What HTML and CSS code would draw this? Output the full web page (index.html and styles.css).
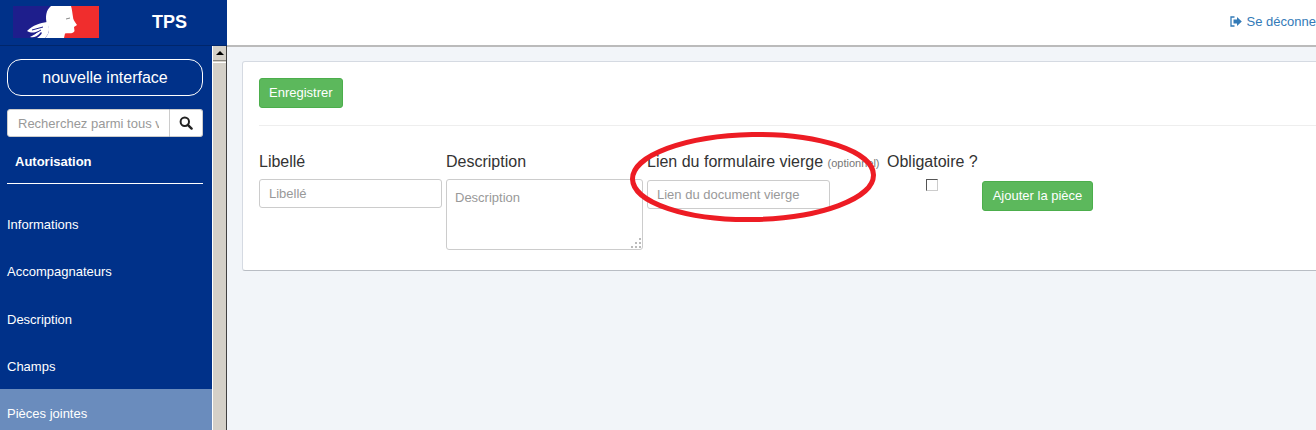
FILE: index.html
```html
<!DOCTYPE html>
<html lang="fr">
<head>
<meta charset="UTF-8">
<title>TPS - Pièces jointes</title>
<link rel="stylesheet" href="styles.css">
</head>
<body>

  <div class="sidebar">
    <div class="brand">
      <svg class="logo" width="86" height="32" viewBox="0 0 86 32">
        <rect width="44" height="32" fill="#1e1e8c"/>
        <rect x="44" width="42" height="32" fill="#f02d2d"/>
        <path d="M38 0 L58 0 C59 3 59.500 8 60 11 C60 13 61 15 64 19 L61 21 L61.500 25 C60 28 57 27 52 27.500 L51 32 L32 32 C37 27 37 22 34 18 C32 11 33 4 38 0 Z" fill="#fff"/>
        <path d="M14 25 C20 19 27 17 34 16 C37 22 37 27 32 32 L24 32 C28 29 30 27 28 26 C24 31 20 32 17 31 C21 29 24 27 25 25 C21 27 18 27 14 25 Z" fill="#fff"/>
        <path d="M19 24 L30 21 M21 28 L28 24" stroke="#1e1e8c" stroke-width="1"/>
        <path d="M53 13 L57 12" stroke="#888" stroke-width="1"/>
      </svg>
      <span class="brand-name">TPS</span>
    </div>
    <div class="side-body">
      <div class="side-panel">
        <a class="new-ui">nouvelle interface</a>
        <div class="search">
          <input class="search-input" type="text" placeholder="Recherchez parmi tous vos dossiers">
          <button class="search-btn">
            <svg width="14" height="14" viewBox="0 0 14 14"><circle cx="5.800" cy="5.800" r="4.200" fill="none" stroke="#222" stroke-width="2"/><path d="M8.800 8.800 L12.600 12.600" stroke="#222" stroke-width="2.400" stroke-linecap="round"/></svg>
          </button>
        </div>
        <div class="proc-title">Autorisation</div>
        <nav class="menu">
          <a class="menu-item">Informations</a>
          <a class="menu-item">Accompagnateurs</a>
          <a class="menu-item">Description</a>
          <a class="menu-item">Champs</a>
          <a class="menu-item active">Pièces jointes</a>
        </nav>
      </div>
      <div class="scrollbar">
        <div class="scroll-arrow"></div>
        <div class="scroll-thumb"></div>
      </div>
    </div>
  </div>

  <div class="main">
    <div class="topbar">
      <a class="logout">
        <svg width="12" height="11" viewBox="0 0 12 11"><path d="M4.500 1 H1 V10 H4.500" fill="none" stroke="#337ab7" stroke-width="1.300"/><path d="M3.500 3.500 H7 V1 L11.800 5.500 L7 10 V7.500 H3.500 Z" fill="#337ab7"/></svg>
        Se déconnecter
      </a>
    </div>
    <div class="content">
      <div class="card">
        <div class="card-top">
          <button class="btn">Enregistrer</button>
        </div>
        <div class="fields">
          <div class="field field-name">
            <label>Libellé</label>
            <input type="text" placeholder="Libellé">
          </div>
          <div class="field field-desc">
            <label>Description</label>
            <div class="area-wrap">
              <textarea placeholder="Description"></textarea>
              <svg class="grip" width="10" height="10" viewBox="0 0 10 10" fill="#bbb">
                <rect x="8" y="0" width="2" height="2"/>
                <rect x="4" y="4" width="2" height="2"/><rect x="8" y="4" width="2" height="2"/>
                <rect x="0" y="8" width="2" height="2"/><rect x="4" y="8" width="2" height="2"/><rect x="8" y="8" width="2" height="2"/>
              </svg>
            </div>
          </div>
          <div class="field field-link">
            <label>Lien du formulaire vierge <small>(optionnel)</small></label>
            <input type="text" placeholder="Lien du document vierge">
          </div>
          <div class="field field-check">
            <label>Obligatoire ?</label>
            <span class="check"></span>
          </div>
          <button class="btn btn-add">Ajouter la pièce</button>
        </div>
      </div>
    </div>
  </div>

  <svg class="circle-mark" width="260" height="104" viewBox="0 0 260 104">
    <ellipse cx="130" cy="52" rx="120.500" ry="42.500" transform="rotate(-1 130 52)" fill="none" stroke="#ed1c24" stroke-width="5"/>
  </svg>

</body>
</html>
```

FILE: styles.css
```css
html, body {
  margin: 0;
  padding: 0;
  height: 100%;
  overflow: hidden;
}
body {
  display: flex;
  font-family: "Liberation Sans", Arial, sans-serif;
  background: #f2f5f9;
  color: #333;
  position: relative;
}
.sidebar {
  width: 227px;
  flex-shrink: 0;
  display: flex;
  flex-direction: column;
  background: #003189;
}
.brand {
  height: 46px;
  box-sizing: border-box;
  display: flex;
  align-items: flex-start;
  padding: 6px 0 0 13px;
  border-bottom: 1px solid #00266b;
}
.logo {
  display: block;
}
.brand-name {
  margin: 6px 0 0 53px;
  color: #fff;
  font-size: 18px;
  font-weight: bold;
}
.side-body {
  flex: 1;
  display: flex;
  min-height: 0;
}
.side-panel {
  width: 212px;
  box-sizing: border-box;
  padding: 13px 9px 0 7px;
}
.new-ui {
  display: block;
  height: 37px;
  box-sizing: border-box;
  border: 1px solid #fff;
  border-radius: 14px;
  color: #fff;
  font-size: 16px;
  line-height: 35px;
  text-align: center;
}
.search {
  display: flex;
  margin-top: 13px;
  height: 28px;
}
.search-input {
  width: 163px;
  box-sizing: border-box;
  border: 1px solid #ccc;
  border-radius: 3px 0 0 3px;
  padding: 0 10px;
  font: 13px "Liberation Sans", Arial, sans-serif;
}
.search-btn {
  flex: 1;
  padding: 0;
  border: 1px solid #ccc;
  border-left: 0;
  border-radius: 0 3px 3px 0;
  background: #fff;
  display: flex;
  align-items: center;
  justify-content: center;
}
.proc-title {
  margin-top: 17px;
  padding: 0 0 14px 8px;
  border-bottom: 1px solid #fff;
  color: #fff;
  font-size: 13px;
  font-weight: bold;
  line-height: 15px;
  height: 15px;
}
.menu {
  margin: 16px -9px 0 -7px;
}
.menu-item {
  display: block;
  height: 47.300px;
  padding-left: 7px;
  color: #fff;
  font-size: 13px;
  line-height: 49px;
}
.menu-item.active {
  background: #6a8cbd;
}
.scrollbar {
  width: 15px;
  box-sizing: border-box;
  background: #d4d0c8;
  border-right: 1px solid #404040;
  border-left: 1px solid #fff;
}
.scroll-arrow {
  height: 15px;
  box-sizing: border-box;
  border-bottom: 1px solid #8a8780;
  position: relative;
}
.scroll-arrow::before {
  content: "";
  position: absolute;
  left: 3px;
  top: 5px;
  border: 4px solid transparent;
  border-top: 0;
  border-bottom-color: #000;
}
.scroll-thumb {
  height: 100%;
  border-top: 1px solid #fff;
  margin-top: 1px;
}
.main {
  flex: 1;
  min-width: 0;
  display: flex;
  flex-direction: column;
}
.topbar {
  height: 47px;
  flex-shrink: 0;
  box-sizing: border-box;
  background: #fff;
  border-bottom: 2px solid #bbb;
  padding: 12px 0 0 1003px;
  white-space: nowrap;
}
.logout {
  color: #337ab7;
  font-size: 13px;
  line-height: 15px;
}
.logout svg {
  vertical-align: -1px;
  margin-right: 1px;
}
.content {
  padding: 14px 0 0 15px;
}
.card {
  width: 1120px;
  height: 210px;
  box-sizing: border-box;
  background: #fff;
  border: 1px solid #d5dae2;
  border-bottom-color: #b9bdc4;
  border-radius: 3px;
  padding: 16px;
}
.card-top {
  height: 47px;
  border-bottom: 1px solid #eee;
}
.btn {
  height: 30px;
  box-sizing: border-box;
  padding: 0 9px 2px;
  border: 1px solid #4cae4c;
  border-radius: 3px;
  background: #5cb85c;
  color: #fff;
  font: 13px "Liberation Sans", Arial, sans-serif;
}
.fields {
  display: flex;
  align-items: flex-start;
  margin-top: 27px;
}
.field label {
  display: block;
  font-size: 16px;
  line-height: 18px;
  color: #333;
  white-space: nowrap;
  margin-bottom: 8px;
}
.field small {
  font-size: 11px;
  color: #777;
}
.field input, .field textarea {
  display: block;
  width: 100%;
  box-sizing: border-box;
  border: 1px solid #ccc;
  border-radius: 3px;
  padding: 6px 9px;
  font: 13px "Liberation Sans", Arial, sans-serif;
  margin: 0;
}
.field input {
  height: 29px;
}
.field textarea {
  height: 71px;
  padding-left: 8px;
  padding-top: 10px;
  resize: none;
}
.area-wrap {
  position: relative;
}
.grip {
  position: absolute;
  right: 2px;
  bottom: 2px;
}
input::placeholder, textarea::placeholder {
  color: #999;
}
.field-name {
  width: 183px;
}
.field-desc {
  width: 197px;
  margin-left: 4px;
}
.field-link {
  width: 183px;
  margin-left: 4px;
}
.field-check {
  width: 95px;
  margin-left: 57px;
}
.check {
  display: block;
  width: 12px;
  height: 12px;
  box-sizing: border-box;
  margin: 3px 0 0 39px;
  border: 1px solid #555;
  border-right-color: #ccc;
  border-bottom-color: #ccc;
  background: #fff;
}
.btn-add {
  margin: 28px 0 0 0;
  width: 111px;
  padding: 0 0 2px;
}
.circle-mark {
  position: absolute;
  left: 623px;
  top: 125px;
}
```
